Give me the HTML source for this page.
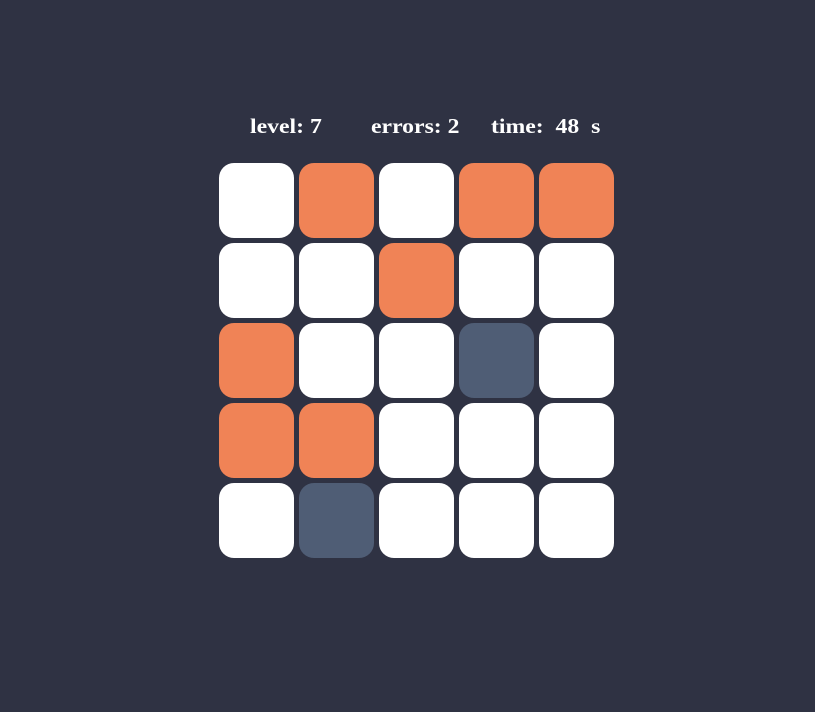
<!DOCTYPE html>
<html><head><style>
html,body{margin:0;padding:0;background:#2f3243;width:815px;height:712px;overflow:hidden}
.t{position:absolute;top:114px;font:bold 21px "Liberation Serif",serif;color:#fff;white-space:pre;transform:scaleX(1.13);transform-origin:0 0}
.c{position:absolute;width:75px;height:75px;border-radius:15px;background:#fff}
.o{background:#f08356}.s{background:#4f5d75}
</style></head><body>
<div class="t" style="left:250px">level: 7</div>
<div class="t" style="left:371px">errors: 2</div>
<div class="t" style="left:491px">time:  48  s</div>
<div id="g"></div>
<script>
var m=["wowoo","wwoww","owwsw","oowww","wswww"],h="";
for(var r=0;r<5;r++)for(var c=0;c<5;c++){var k=m[r][c];h+='<div class="c '+(k=='o'?'o':k=='s'?'s':'')+'" style="left:'+(219+c*80)+'px;top:'+(163+r*80)+'px"></div>';}
document.getElementById("g").innerHTML=h;
</script>
</body></html>
